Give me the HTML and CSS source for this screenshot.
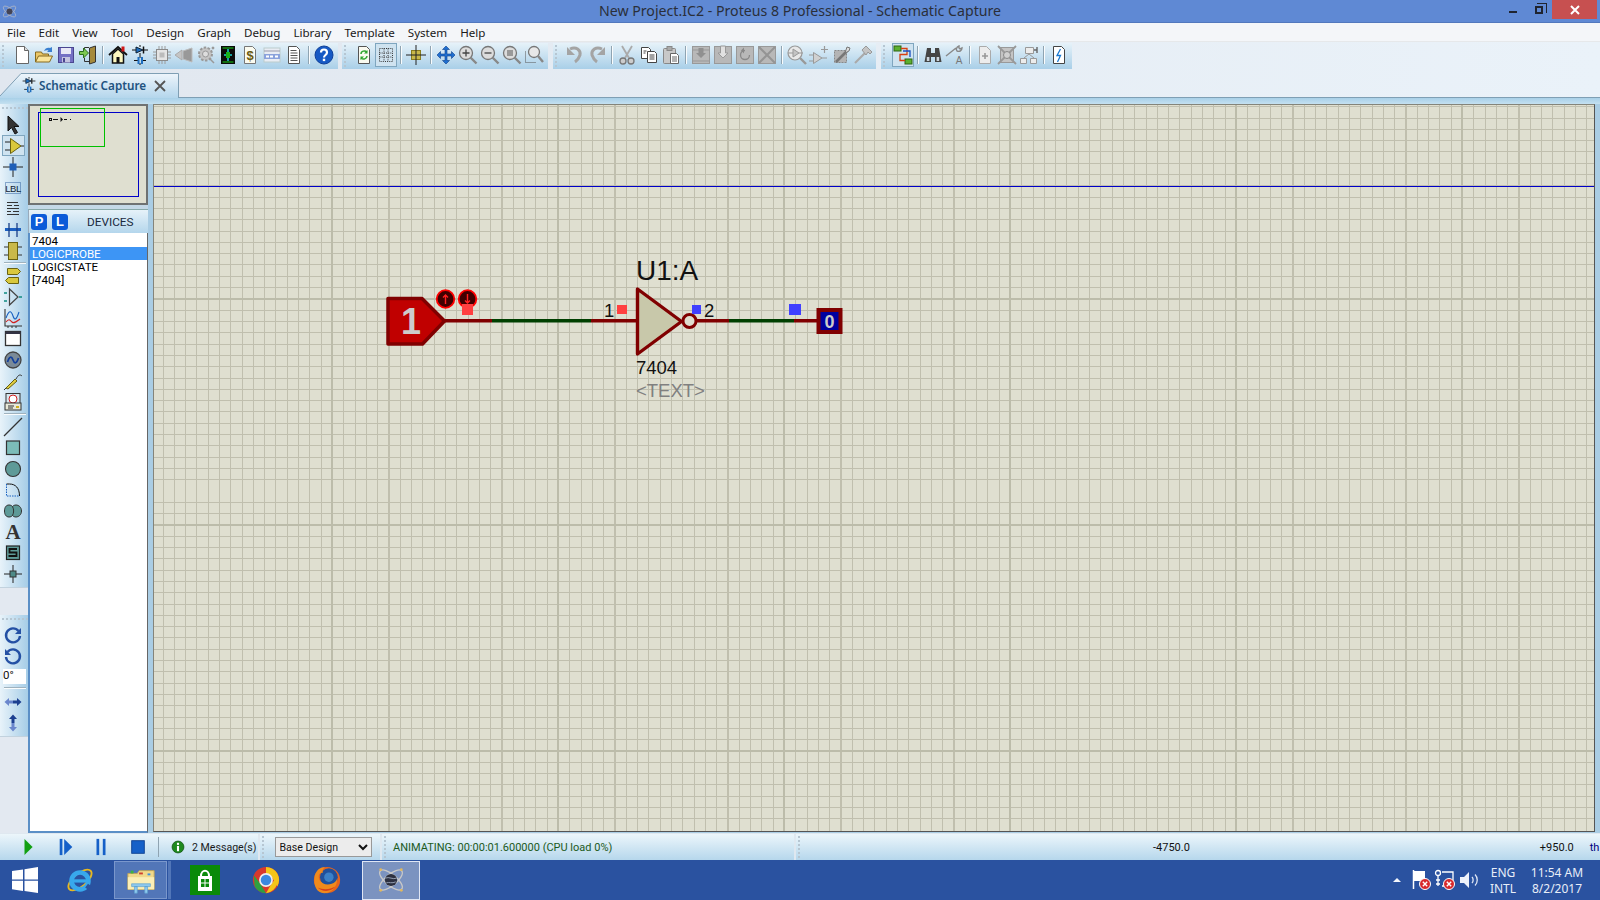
FILE: index.html
```html
<!doctype html>
<html lang="en">
<head>
	<meta charset="UTF-8">
	<title>New Project.IC2 - Proteus 8 Professional - Schematic Capture</title>
	<link rel="stylesheet" href="styles.css">
</head>
<body>
	<!-- icon set, each one on a 20x20 box -->
	<svg class="defs">
		<symbol id="i-new" viewBox="0 0 20 20"><path d="M4.500 1.500h8l4 4v13h-12z" fill="#fff" stroke="#666"/><path d="M12.500 1.500v4h4" fill="#ddd" stroke="#666"/></symbol>
		<symbol id="i-open" viewBox="0 0 20 20"><path d="M1.500 17V7h6l1 2h6v3" fill="#ecc766" stroke="#85691e"/><path d="M1.500 17l3-6h14l-3 6z" fill="#fbe59a" stroke="#85691e"/><path d="M10 6c1-3 4-4 6-3l2-1v5h-5l1.500-1.500c-1-.5-3-.5-4.500.5z" fill="#3a7fd0"/></symbol>
		<symbol id="i-save" viewBox="0 0 20 20"><rect x="2.500" y="2.500" width="15" height="15" fill="#7470c4" stroke="#4a4690"/><rect x="5" y="3" width="10" height="6" fill="#e8e8f6"/><rect x="6" y="12" width="8" height="5.500" fill="#c4c4e0"/><rect x="7" y="13" width="2" height="4" fill="#4a4690"/></symbol>
		<symbol id="i-exit" viewBox="0 0 20 20"><path d="M11.500 3l6-2v16l-6 2z" fill="#a58a3c" stroke="#333"/><path d="M11 2.500H6.500v3M6.500 13v3.500H11" fill="none" stroke="#333"/><path d="M1.500 6.500h4V3l5 5-5 5V9.500h-4z" fill="#7cc850" stroke="#2c6e1d"/></symbol>
		<symbol id="i-home" viewBox="0 0 20 20"><path d="M4.500 9v9h11V9L10 4z" fill="#fdf8c0" stroke="#111" stroke-width="1.500"/><path d="M1 10l9-8 9 8" fill="none" stroke="#111" stroke-width="1.800"/><rect x="13.500" y="1.500" width="3" height="5" fill="#d01818"/><rect x="8.500" y="12" width="3" height="6" fill="#111"/></symbol>
		<symbol id="i-comp" viewBox="0 0 20 20"><path d="M10 0v2M10 8v4M2 5h4M14 5h4M4 15.500h4M12 15.500h4M10 12v1M10 18v2" stroke="#111" fill="none"/><path d="M6 2l7 3-7 3z" fill="#1f6fc0" stroke="#123"/><path d="M13.500 1.500v7" stroke="#111" stroke-width="1.500"/><rect x="7.500" y="12" width="2" height="7" fill="#1f6fc0"/><rect x="11" y="12" width="2" height="7" fill="#1f6fc0"/></symbol>
		<symbol id="i-chip" viewBox="0 0 20 20"><rect x="4.500" y="4.500" width="11" height="11" fill="#e4e4e4" stroke="#8a8a8a"/><rect x="7.500" y="7.500" width="5" height="5" fill="#bbb"/><path d="M7 1v3M10 1v3M13 1v3M7 16v3M10 16v3M13 16v3M1 7h3M1 10h3M1 13h3M16 7h3M16 10h3M16 13h3" stroke="#9a9a9a"/></symbol>
		<symbol id="i-back" viewBox="0 0 20 20"><path d="M1 10l7-5v10z" fill="#c4c4c4" stroke="#aaa"/><path d="M9 6l9-3v14l-9-3z" fill="#999" stroke="#bbb"/></symbol>
		<symbol id="i-gear" viewBox="0 0 20 20"><circle cx="9.500" cy="9" r="6.500" fill="#c4c4c4" stroke="#999" stroke-width="2" stroke-dasharray="2.500 1.500"/><circle cx="9.500" cy="9" r="3" fill="#ddd" stroke="#999"/><path d="M14 14l4 4M16 2l2 2M18 2l-2 2" stroke="#999" stroke-width="1.500"/></symbol>
		<symbol id="i-pcb" viewBox="0 0 20 20"><rect x="3" y="1" width="14" height="18" fill="#0a0a0a"/><path d="M4.500 3h11M4.500 17h11" stroke="#18d018"/><path d="M10 4v12M6 10h8" stroke="#18d0d0" stroke-width="1.500"/><rect x="8" y="7" width="4" height="6" fill="#18b018"/></symbol>
		<symbol id="i-bill" viewBox="0 0 20 20"><path d="M4.500 1.500h8l3 3v14h-11z" fill="#fbfbf0" stroke="#777"/><text x="10" y="15" class="ig ig-bill">$</text></symbol>
		<symbol id="i-bom" viewBox="0 0 20 20"><rect x="2" y="3" width="16" height="14" fill="#e8ecf4" stroke="#bcc"/><path d="M2 6h16" stroke="#99a"/><rect x="2" y="9" width="16" height="5" fill="#8aa2dc"/><path d="M4 11.500h3M8 11.500h3M13 11.500h3" stroke="#fff" stroke-width="2"/></symbol>
		<symbol id="i-note" viewBox="0 0 20 20"><path d="M4.500 1.500h8l3 3v14h-11z" fill="#fff" stroke="#555"/><path d="M6.500 5.500h6M6.500 8h7M6.500 10.500h7M6.500 13h7M6.500 15.500h7" stroke="#555"/></symbol>
		<symbol id="i-help" viewBox="0 0 20 20"><circle cx="10" cy="10" r="9" fill="#1659c4" stroke="#0e3f98"/><path d="M7 7.500c0-4 6-4 6 0 0 2.500-3 2.500-3 5" fill="none" stroke="#fff" stroke-width="2.200"/><rect x="8.800" y="13.700" width="2.400" height="2.400" fill="#fff"/></symbol>
		<symbol id="i-sync" viewBox="0 0 20 20"><path d="M4.500 1.500h8l3 3v14h-11z" fill="#fafaf0" stroke="#555"/><path d="M7 9c0-3 4-4 6-2M13 11c0 3-4 4-6 2" fill="none" stroke="#2fa52f" stroke-width="1.500"/><path d="M13.500 5v3.500H10zM6.500 15v-3.500H10z" fill="#2fa52f"/></symbol>
		<symbol id="i-grid" viewBox="0 0 20 20"><path d="M3.500 3.500h13v13h-13zM3.500 8h13M3.500 12h13M8 3.500v13M12 3.500v13" fill="none" stroke="#333" stroke-dasharray="1 1.170"/></symbol>
		<symbol id="i-origin" viewBox="0 0 20 20"><rect x="5.500" y="5.500" width="9" height="9" fill="#c9b94a" stroke="#8a7d20"/><path d="M10 0v20M0 10h20" stroke="#222"/></symbol>
		<symbol id="i-pan" viewBox="0 0 20 20"><path d="M10 1l3.500 3.500h-2.500V9h4.500V6.500L19 10l-3.500 3.500V11H11v4.500h2.500L10 19l-3.500-3.500H9V11H4.500v2.500L1 10l3.500-3.500V9H9V4.500H6.500z" fill="#1f6fd0" stroke="#0c3f8c" stroke-width=".6"/></symbol>
		<symbol id="i-zin" viewBox="0 0 20 20"><circle cx="8" cy="8" r="6.500" fill="#dcdcdc" stroke="#777" stroke-width="1.300"/><path d="M4.500 8h7M8 4.500v7" stroke="#444" stroke-width="1.300"/><path d="M12.500 12.500l6 6" stroke="#888" stroke-width="2.400"/></symbol>
		<symbol id="i-zout" viewBox="0 0 20 20"><circle cx="8" cy="8" r="6.500" fill="#dcdcdc" stroke="#777" stroke-width="1.300"/><path d="M4.500 8h7" stroke="#444" stroke-width="1.300"/><path d="M12.500 12.500l6 6" stroke="#888" stroke-width="2.400"/></symbol>
		<symbol id="i-zall" viewBox="0 0 20 20"><circle cx="8" cy="8" r="6.500" fill="#dcdcdc" stroke="#777" stroke-width="1.300"/><rect x="5" y="5" width="6" height="6" fill="#999"/><path d="M12.500 12.500l6 6" stroke="#888" stroke-width="2.400"/></symbol>
		<symbol id="i-zarea" viewBox="0 0 20 20"><path d="M1.500 6.500v11h11" fill="none" stroke="#555" stroke-dasharray="1 1"/><circle cx="10" cy="7" r="5.500" fill="#e8e8e8" stroke="#777" stroke-width="1.300"/><path d="M14 11l5 6" stroke="#888" stroke-width="2.400"/></symbol>
		<symbol id="i-undo" viewBox="0 0 20 20"><path d="M5 4c6-3 11 1 10 6-1 3-2 5-5 7" fill="none" stroke="#a4a4a4" stroke-width="3"/><path d="M2 2v8h8z" fill="#a4a4a4"/></symbol>
		<symbol id="i-redo" viewBox="0 0 20 20"><path d="M15 4C9 1 4 5 5 10c1 3 2 5 5 7" fill="none" stroke="#a4a4a4" stroke-width="3"/><path d="M18 2v8h-8z" fill="#a4a4a4"/></symbol>
		<symbol id="i-cut" viewBox="0 0 20 20"><path d="M5 1l7 12M15 1L8 13" stroke="#aaa" stroke-width="1.800"/><circle cx="6" cy="16" r="3" fill="#ccc" stroke="#777" stroke-width="1.300"/><circle cx="14" cy="16" r="3" fill="#ccc" stroke="#777" stroke-width="1.300"/></symbol>
		<symbol id="i-copy" viewBox="0 0 20 20"><path d="M2.500 2.500h7l2 2v9h-9z" fill="#fff" stroke="#444"/><path d="M8.500 6.500h7l2 2v9h-9z" fill="#fff" stroke="#444"/><path d="M10.500 10h5M10.500 12h5M10.500 14h5M4.500 6h3M4.500 8h2" stroke="#444"/></symbol>
		<symbol id="i-paste" viewBox="0 0 20 20"><rect x="2.500" y="3.500" width="12" height="15" rx="1" fill="#c8c8c8" stroke="#888"/><rect x="6" y="1.500" width="5" height="4" fill="#aaa" stroke="#888"/><path d="M9.500 8.500h6l2 2v8h-8z" fill="#fff" stroke="#666"/><path d="M11 12h5M11 14h5M11 16h5" stroke="#666"/></symbol>
		<symbol id="i-bcopy" viewBox="0 0 20 20"><rect x="1.500" y="1.500" width="17" height="17" fill="#b8b8b8" stroke="#999"/><path d="M1.500 5h17M1.500 16h17" stroke="#999"/><path d="M7.500 3h5v5H15l-5 5-5-5h2.500z" fill="#909090"/></symbol>
		<symbol id="i-bmove" viewBox="0 0 20 20"><rect x="1.500" y="1.500" width="17" height="17" fill="#b8b8b8" stroke="#999"/><path d="M7.500 1h5v7H15l-5 5-5-5h2.500z" fill="#e0e0e0" stroke="#999"/></symbol>
		<symbol id="i-brot" viewBox="0 0 20 20"><rect x="1.500" y="1.500" width="17" height="17" fill="#b8b8b8" stroke="#999"/><path d="M14.500 10a4.500 4.500 0 1 1-4.500-4.500" fill="none" stroke="#888" stroke-width="1.300"/><path d="M9 2.500v6l-3-3z" fill="#888"/></symbol>
		<symbol id="i-bdel" viewBox="0 0 20 20"><rect x="1.500" y="1.500" width="17" height="17" fill="#b8b8b8" stroke="#999"/><path d="M2 2l16 16M18 2L2 18" stroke="#949494" stroke-width="2"/></symbol>
		<symbol id="i-pick" viewBox="0 0 20 20"><circle cx="8" cy="8" r="7" fill="#e8e8e8" stroke="#999" stroke-width="1.200"/><path d="M6 4v8l6-4zM1 8h5M12 8h4" fill="#c4c4c4" stroke="#999"/><path d="M13 13l6 6" stroke="#999" stroke-width="2.400"/></symbol>
		<symbol id="i-make" viewBox="0 0 20 20"><path d="M4.500 7.500v11L13 13z" fill="#d0d0d0" stroke="#999"/><path d="M0 10h4M0 16h4M13 13h5M12 4.500h7M15.500 1v7" stroke="#999" stroke-width="1.200"/></symbol>
		<symbol id="i-pack" viewBox="0 0 20 20"><rect x="3.500" y="5.500" width="12" height="12" fill="#b4b4b4" stroke="#888" stroke-dasharray="2 1"/><path d="M5 17L16 6" stroke="#777" stroke-width="2.600"/><path d="M14 8l2-6 3 1-1 3z" fill="#ddd" stroke="#777"/></symbol>
		<symbol id="i-ham" viewBox="0 0 20 20"><path d="M2 18l10-10" stroke="#aaa" stroke-width="2.200"/><path d="M9 5l4-4 6 6-2 2-2-2-2 3z" fill="#c4c4c4" stroke="#999"/></symbol>
		<symbol id="i-route" viewBox="0 0 20 20"><rect x="1" y="1" width="7" height="5" fill="#5cb030" stroke="#2c6410"/><rect x="12" y="14" width="7" height="5" fill="#5cb030" stroke="#2c6410"/><path d="M8 3.500h6v6H7v6h5" fill="none" stroke="#d84010" stroke-width="1.300"/><path d="M10 6h7v6" fill="none" stroke="#1a4fc0" stroke-width="1.300"/></symbol>
		<symbol id="i-find" viewBox="0 0 20 20"><path d="M4 3h4v5h4V3h4l2.500 14h-6.500v-5H8v5H1.500z" fill="#444"/><rect x="3.800" y="12" width="2.600" height="4" fill="#cbd4dc"/><rect x="13.600" y="12" width="2.600" height="4" fill="#cbd4dc"/></symbol>
		<symbol id="i-prop" viewBox="0 0 20 20"><path d="M1 11L11 3M14 1c-3 1-3 4-2 5 2 1 5 0 5-3l-2 1-1-1z" fill="none" stroke="#888" stroke-width="1.400"/><text x="14" y="19" class="ig ig-prop">A</text></symbol>
		<symbol id="i-sadd" viewBox="0 0 20 20"><path d="M4.500 1.500h7l4 4v13h-11z" fill="#ececec" stroke="#aaa"/><path d="M7 11h6M10 8v6" stroke="#999" stroke-width="1.600"/></symbol>
		<symbol id="i-sdel" viewBox="0 0 20 20"><rect x="3.500" y="2.500" width="13" height="15" fill="#c4c4c4" stroke="#999"/><path d="M1 1l18 18M19 1L1 19" stroke="#999" stroke-width="1.800"/><circle cx="10" cy="10" r="3.500" fill="#d0d0d0" stroke="#888"/></symbol>
		<symbol id="i-parent" viewBox="0 0 20 20"><path d="M6.500 2.500h8v6h-8zM1.500 13.500h6v5h-6zM11.500 13.500h6v5h-6z" fill="#ececec" stroke="#999"/><path d="M10 9l-5 4M10 9l5 4" stroke="#999"/><path d="M15 5h3M18 2v6" stroke="#666" stroke-width="1.400"/></symbol>
		<symbol id="i-net" viewBox="0 0 20 20"><path d="M4.500 1.500h8l3 3v14h-11z" fill="#fff" stroke="#444"/><path d="M11.500 4L8 10.500h3.500L8.500 17" fill="none" stroke="#1878d0" stroke-width="1.300"/></symbol>
		<symbol id="i-sel" viewBox="0 0 20 20"><path d="M5 1v15l3.500-3.500L12 19l2.500-1.500-3.500-6h5z" fill="#333" stroke="#111"/></symbol>
		<symbol id="i-gate" viewBox="0 0 20 20"><path d="M6.500 2.500v15L17 10z" fill="#d9c83c" stroke="#6a6210"/><path d="M1 6h5M1 14h5M17 10h3" stroke="#222"/></symbol>
		<symbol id="i-junc" viewBox="0 0 20 20"><path d="M10 0v20M0 10h20" stroke="#222"/><rect x="6.500" y="6.500" width="7" height="7" fill="#1f5fb8"/></symbol>
		<symbol id="i-lbl" viewBox="0 0 20 20"><rect x="2.500" y="4.500" width="15" height="11" fill="none" stroke="#3060a0" stroke-dasharray="1 1"/><text x="10" y="14" class="ig ig-lbl">LBL</text></symbol>
		<symbol id="i-script" viewBox="0 0 20 20"><path d="M4 3.500h11M4 6.500h5M11 6.500h5M4 9.500h12M4 12.500h4M10 12.500h6M4 15.500h12" stroke="#333"/></symbol>
		<symbol id="i-bus" viewBox="0 0 20 20"><rect x="2" y="8" width="16" height="3" fill="#1c5fc0"/><path d="M6 3v14M14 3v14" stroke="#1a3f88" stroke-width="1.300"/></symbol>
		<symbol id="i-sub" viewBox="0 0 20 20"><rect x="5.500" y="1.500" width="9" height="17" fill="#c9b94a" stroke="#6a6210"/><path d="M1 6h4M1 14h4M15 6h4M15 14h4" stroke="#333"/></symbol>
		<symbol id="i-term" viewBox="0 0 20 20"><path d="M4.500 2.500h10l3 3-3 3h-10z" fill="#d9c83c" stroke="#6a6210"/><path d="M15.500 11.500h-10l-3 3 3 3h10z" fill="#d9c83c" stroke="#6a6210"/></symbol>
		<symbol id="i-pin" viewBox="0 0 20 20"><path d="M6.500 2v16L15 10z" fill="none" stroke="#444" stroke-width="1.200"/><path d="M1 6h3M1 14h3M16 10h3" stroke="#0f8a80" stroke-width="1.300"/></symbol>
		<symbol id="i-graph" viewBox="0 0 20 20"><path d="M2 1v17h17" fill="none" stroke="#333" stroke-width="1.100"/><path d="M3 10c3-8 5-8 7-2s4 2 6-4" fill="none" stroke="#1860c0" stroke-width="1.100"/><path d="M3 14c3-4 4-2 6 0s4 0 8-3" fill="none" stroke="#d02020" stroke-width="1.100"/><path d="M5 18v2M9 18v2M13 18v2" stroke="#333"/></symbol>
		<symbol id="i-tape" viewBox="0 0 20 20"><rect x="2.500" y="2.500" width="15" height="14" fill="#fff" stroke="#333" stroke-width="1.300"/><rect x="2.500" y="2.500" width="15" height="2.500" fill="#334"/></symbol>
		<symbol id="i-gen" viewBox="0 0 20 20"><circle cx="10" cy="10" r="8" fill="#7a8a98" stroke="#444" stroke-width="1.300"/><path d="M4.500 12c2-6 4-6 5.500-2s3.500 4 5.500-2" fill="none" stroke="#123f9c" stroke-width="1.800"/></symbol>
		<symbol id="i-probe" viewBox="0 0 20 20"><path d="M3 17l9-9 2 2-9 8z" fill="#e0cc40" stroke="#665f10"/><path d="M1 19l2-2M13 8c2-4 4-5 6-3" fill="none" stroke="#333"/></symbol>
		<symbol id="i-inst" viewBox="0 0 20 20"><rect x="3" y="1.500" width="14" height="10" fill="#d8e8f0" stroke="#333"/><circle cx="10" cy="7" r="4" fill="#fff" stroke="#d02020"/><rect x="2" y="11" width="16" height="7" fill="#e8e8d8" stroke="#333"/><path d="M5 14h6M5 16h5" stroke="#333"/><rect x="13" y="14" width="3" height="2" fill="#d0b020"/></symbol>
		<symbol id="i-line" viewBox="0 0 20 20"><path d="M1 19L19 1" stroke="#333" stroke-width="1.300"/></symbol>
		<symbol id="i-rect" viewBox="0 0 20 20"><rect x="3.500" y="3" width="13" height="13.500" fill="#7cbcb8" stroke="#333" stroke-width="1.200"/></symbol>
		<symbol id="i-circ" viewBox="0 0 20 20"><circle cx="10" cy="10" r="7.500" fill="#5e9a98" stroke="#333" stroke-width="1.100"/></symbol>
		<symbol id="i-arc" viewBox="0 0 20 20"><path d="M3.500 4h3c6 0 10 4 10 12" fill="none" stroke="#111"/><path d="M3.500 4v12h13" fill="none" stroke="#1860c0" stroke-dasharray="1.500 1"/></symbol>
		<symbol id="i-path" viewBox="0 0 20 20"><path d="M6 4C3 4 1.500 6.500 1.500 10S3 16 6 16c1.500 0 2.500-.5 3.500-1.500 1 1 2 1.500 3.500 1.500 3 0 5.500-2.500 5.500-6S16 4 13 4c-1.500 0-2.500.5-3.500 1.500C8.500 4.500 7.500 4 6 4z" fill="#5e9a98" stroke="#333"/><path d="M9.500 5.500c1.500 3 1.500 6 0 9" fill="none" stroke="#333"/></symbol>
		<symbol id="i-a" viewBox="0 0 20 20"><text x="10" y="17" class="ig ig-a">A</text></symbol>
		<symbol id="i-s" viewBox="0 0 20 20"><rect x="3.500" y="3" width="13" height="13.500" fill="#5e9a98" stroke="#222" stroke-width="1.200"/><path d="M14 6H6.500v3.500h7V13H5.500" fill="none" stroke="#111" stroke-width="1.800"/></symbol>
		<symbol id="i-mark" viewBox="0 0 20 20"><path d="M10 1v18M1 10h18" stroke="#222"/><rect x="7" y="7" width="6" height="6" fill="#4e8a88" stroke="#333"/></symbol>
		<symbol id="i-cw" viewBox="0 0 20 20"><path d="M15.500 6a7 7 0 1 0 1.500 5" fill="none" stroke="#2450a4" stroke-width="2.400"/><path d="M18 3v6h-6z" fill="#2450a4"/></symbol>
		<symbol id="i-ccw" viewBox="0 0 20 20"><path d="M4.500 6a7 7 0 1 1-1.500 5" fill="none" stroke="#2450a4" stroke-width="2.400"/><path d="M2 3v6h6z" fill="#2450a4"/></symbol>
		<symbol id="i-fliph" viewBox="0 0 20 20"><path d="M10 8.500H6V6l-4.500 4L6 14v-2.500h4z" fill="#6a86cc"/><path d="M10 8.500h4V6l4.500 4-4.500 4v-2.500h-4z" fill="#1c3f90"/></symbol>
		<symbol id="i-flipv" viewBox="0 0 20 20"><path d="M8.500 10V6H6l4-4.500L14 6h-2.500v4z" fill="#1c3f90"/><path d="M8.500 10v4H6l4 4.500 4-4.500h-2.500v-4z" fill="#6a86cc"/></symbol>
		<symbol id="i-play" viewBox="0 0 20 20"><path d="M5 1l9 9-9 9z" fill="#12a012"/></symbol>
		<symbol id="i-step" viewBox="0 0 20 20"><rect x="3" y="1" width="3" height="18" fill="#1560c8"/><path d="M8 1l9 9-9 9z" fill="#1560c8"/></symbol>
		<symbol id="i-pause" viewBox="0 0 20 20"><rect x="5" y="1" width="3" height="18" fill="#1560c8"/><rect x="12" y="1" width="3" height="18" fill="#1560c8"/></symbol>
		<symbol id="i-stop" viewBox="0 0 20 20"><rect x="3" y="3" width="14" height="14" fill="#1560c8" stroke="#0d3f90"/></symbol>
		<symbol id="i-info" viewBox="0 0 20 20"><circle cx="10" cy="10" r="8.500" fill="#1e8a1e" stroke="#0c4a0c"/><rect x="8.500" y="4" width="3" height="3" fill="#fff"/><rect x="8.500" y="8.500" width="3" height="7.500" fill="#fff"/></symbol>
	</svg>

	<div class="titlebar">
		<svg class="appicon" viewBox="0 0 20 20"><ellipse cx="10" cy="10" rx="9" ry="3.500" transform="rotate(40 10 10)" fill="none" stroke="#aab4c8"/><ellipse cx="10" cy="10" rx="9" ry="3.500" transform="rotate(-40 10 10)" fill="none" stroke="#aab4c8"/><circle cx="10" cy="10" r="3.500" fill="#445"/></svg>
		<div class="title">New Project.IC2 - Proteus 8 Professional - Schematic Capture</div>
		<div class="winbtns">
			<div class="winbtn"><span class="win-min"></span></div>
			<div class="winbtn"><span class="win-max"></span></div>
			<div class="winclose">
				<svg viewBox="0 0 10 10"><path d="M1 1l8 8M9 1l-8 8" stroke="#fff" stroke-width="2"/></svg>
			</div>
		</div>
	</div>

	<div class="menubar">
		<span>File</span><span>Edit</span><span>View</span><span>Tool</span><span>Design</span><span>Graph</span><span>Debug</span><span>Library</span><span>Template</span><span>System</span><span>Help</span>
	</div>

	<div class="toprow">
		<div class="toolbars">
			<div class="tgroup g1">
				<div class="grip"></div>
				<div class="tb"><svg class="ic"><use href="#i-new"/></svg></div>
				<div class="tb"><svg class="ic"><use href="#i-open"/></svg></div>
				<div class="tb"><svg class="ic"><use href="#i-save"/></svg></div>
				<div class="tb"><svg class="ic"><use href="#i-exit"/></svg></div>
				<div class="tsep"></div>
				<div class="tb"><svg class="ic"><use href="#i-home"/></svg></div>
				<div class="tb"><svg class="ic"><use href="#i-comp"/></svg></div>
				<div class="tb"><svg class="ic"><use href="#i-chip"/></svg></div>
				<div class="tb"><svg class="ic"><use href="#i-back"/></svg></div>
				<div class="tb"><svg class="ic"><use href="#i-gear"/></svg></div>
				<div class="tb"><svg class="ic"><use href="#i-pcb"/></svg></div>
				<div class="tb"><svg class="ic"><use href="#i-bill"/></svg></div>
				<div class="tb"><svg class="ic"><use href="#i-bom"/></svg></div>
				<div class="tb"><svg class="ic"><use href="#i-note"/></svg></div>
				<div class="tsep"></div>
				<div class="tb"><svg class="ic"><use href="#i-help"/></svg></div>
			</div>
			<div class="tgroup g2">
				<div class="grip"></div>
				<div class="tb"><svg class="ic"><use href="#i-sync"/></svg></div>
				<div class="tb on"><svg class="ic"><use href="#i-grid"/></svg></div>
				<div class="tsep"></div>
				<div class="tb"><svg class="ic"><use href="#i-origin"/></svg></div>
				<div class="tsep"></div>
				<div class="tb"><svg class="ic"><use href="#i-pan"/></svg></div>
				<div class="tb"><svg class="ic"><use href="#i-zin"/></svg></div>
				<div class="tb"><svg class="ic"><use href="#i-zout"/></svg></div>
				<div class="tb"><svg class="ic"><use href="#i-zall"/></svg></div>
				<div class="tb"><svg class="ic"><use href="#i-zarea"/></svg></div>
			</div>
			<div class="tgroup g3">
				<div class="grip"></div>
				<div class="tb"><svg class="ic"><use href="#i-undo"/></svg></div>
				<div class="tb"><svg class="ic"><use href="#i-redo"/></svg></div>
				<div class="tsep"></div>
				<div class="tb"><svg class="ic"><use href="#i-cut"/></svg></div>
				<div class="tb"><svg class="ic"><use href="#i-copy"/></svg></div>
				<div class="tb"><svg class="ic"><use href="#i-paste"/></svg></div>
				<div class="tsep"></div>
				<div class="tb"><svg class="ic"><use href="#i-bcopy"/></svg></div>
				<div class="tb"><svg class="ic"><use href="#i-bmove"/></svg></div>
				<div class="tb"><svg class="ic"><use href="#i-brot"/></svg></div>
				<div class="tb"><svg class="ic"><use href="#i-bdel"/></svg></div>
				<div class="tsep"></div>
				<div class="tb"><svg class="ic"><use href="#i-pick"/></svg></div>
				<div class="tb"><svg class="ic"><use href="#i-make"/></svg></div>
				<div class="tb"><svg class="ic"><use href="#i-pack"/></svg></div>
				<div class="tb"><svg class="ic"><use href="#i-ham"/></svg></div>
			</div>
			<div class="tgroup g4">
				<div class="grip"></div>
				<div class="tb on"><svg class="ic"><use href="#i-route"/></svg></div>
				<div class="tsep"></div>
				<div class="tb"><svg class="ic"><use href="#i-find"/></svg></div>
				<div class="tb"><svg class="ic"><use href="#i-prop"/></svg></div>
				<div class="tsep"></div>
				<div class="tb"><svg class="ic"><use href="#i-sadd"/></svg></div>
				<div class="tb"><svg class="ic"><use href="#i-sdel"/></svg></div>
				<div class="tb"><svg class="ic"><use href="#i-parent"/></svg></div>
				<div class="tsep"></div>
				<div class="tb"><svg class="ic"><use href="#i-net"/></svg></div>
			</div>
		</div>
		<div class="tab">
			<svg class="tabshape" viewBox="0 0 179 25">
				<defs><linearGradient id="tabfill" x1="0" y1="0" x2="0" y2="1"><stop offset="0" stop-color="#eef5fb"/><stop offset="1" stop-color="#b4d6ec"/></linearGradient></defs>
				<path d="M0 23L21 .5h157.500V25H0z" fill="url(#tabfill)"/>
				<path d="M0 23L21 .5h157.500V25" fill="none" stroke="#7f9fb4"/>
			</svg>
			<svg class="tabicon"><use href="#i-comp"/></svg>
			<span class="tablabel">Schematic Capture</span>
			<svg class="tabclose" viewBox="0 0 12 12"><path d="M1 1l10 10M11 1L1 11" stroke="#555" stroke-width="1.800"/></svg>
		</div>
	</div>
	<div class="band"></div>

	<div class="workspace">
		<div class="sidetools">
			<div class="sgroup">
				<div class="grip-h"></div>
				<div class="sb"><svg class="ic"><use href="#i-sel"/></svg></div>
				<div class="sb on"><svg class="ic"><use href="#i-gate"/></svg></div>
				<div class="sb"><svg class="ic"><use href="#i-junc"/></svg></div>
				<div class="sb"><svg class="ic"><use href="#i-lbl"/></svg></div>
				<div class="sb"><svg class="ic"><use href="#i-script"/></svg></div>
				<div class="sb"><svg class="ic"><use href="#i-bus"/></svg></div>
				<div class="sb"><svg class="ic"><use href="#i-sub"/></svg></div>
				<div class="ssep"></div>
				<div class="sb"><svg class="ic"><use href="#i-term"/></svg></div>
				<div class="sb"><svg class="ic"><use href="#i-pin"/></svg></div>
				<div class="sb"><svg class="ic"><use href="#i-graph"/></svg></div>
				<div class="sb"><svg class="ic"><use href="#i-tape"/></svg></div>
				<div class="sb"><svg class="ic"><use href="#i-gen"/></svg></div>
				<div class="sb"><svg class="ic"><use href="#i-probe"/></svg></div>
				<div class="sb"><svg class="ic"><use href="#i-inst"/></svg></div>
				<div class="ssep"></div>
				<div class="sb"><svg class="ic"><use href="#i-line"/></svg></div>
				<div class="sb"><svg class="ic"><use href="#i-rect"/></svg></div>
				<div class="sb"><svg class="ic"><use href="#i-circ"/></svg></div>
				<div class="sb"><svg class="ic"><use href="#i-arc"/></svg></div>
				<div class="sb"><svg class="ic"><use href="#i-path"/></svg></div>
				<div class="sb"><svg class="ic"><use href="#i-a"/></svg></div>
				<div class="sb"><svg class="ic"><use href="#i-s"/></svg></div>
				<div class="sb"><svg class="ic"><use href="#i-mark"/></svg></div>
			</div>
			<div class="sgroup second">
				<div class="grip-h"></div>
				<div class="sb"><svg class="ic"><use href="#i-cw"/></svg></div>
				<div class="sb"><svg class="ic"><use href="#i-ccw"/></svg></div>
				<div class="angle">0°</div>
				<div class="ssep"></div>
				<div class="sb"><svg class="ic"><use href="#i-fliph"/></svg></div>
				<div class="sb"><svg class="ic"><use href="#i-flipv"/></svg></div>
			</div>
		</div>

		<div class="sidepanel">
			<div class="overview">
				<svg viewBox="0 0 116 97">
					<rect x="8.500" y="6.500" width="100" height="84" fill="none" stroke="#0000c8"/>
					<rect x="10.500" y="2.500" width="64" height="38" fill="none" stroke="#00c000"/>
					<path d="M23 13.500h5M34 13.500h3M40 13.500h1" stroke="#111"/>
					<rect x="19.500" y="12.500" width="2" height="2" fill="none" stroke="#111"/>
					<path d="M30.500 11v5l2.500-2.500z" fill="#111"/>
				</svg>
			</div>
			<div class="devices">
				<div class="devhead">
					<span class="devbtn">P</span>
					<span class="devbtn">L</span>
					<span class="devtitle">DEVICES</span>
				</div>
				<ul class="devlist">
					<li>7404</li>
					<li class="picked">LOGICPROBE</li>
					<li>LOGICSTATE</li>
					<li>[7404]</li>
				</ul>
			</div>
		</div>

		<div class="canvas">
			<!-- viewBox keeps page coordinates so the drawing can be read against the screen -->
			<svg class="sheet" viewBox="154 105 1440 726">
				<path d="M154 186.500h1440" stroke="#0000c8"/>

				<path d="M445 320.800h47M591 320.800h46M697 320.800h32M794 320.800h23" stroke="#800000" stroke-width="3.500"/>
				<path d="M492 320.800h99M729 320.800h65" stroke="#004000" stroke-width="3.500"/>

				<path d="M388 298.500h34l22.500 22.500-22 23h-34.500z" fill="#c00000" stroke="#800000" stroke-width="3.500" stroke-linejoin="round"/>
				<text x="411" y="334" class="logic-one">1</text>

				<path d="M637.500 289v65l44-32.500z" fill="#c8c8aa" stroke="#800000" stroke-width="3.400" stroke-linejoin="round"/>
				<circle cx="689.500" cy="321" r="6.500" fill="#dfdfd0" stroke="#800000" stroke-width="3"/>

				<rect x="818.500" y="310" width="22" height="22" fill="#0000a0" stroke="#800000" stroke-width="4"/>
				<text x="829.500" y="328" class="logic-zero">0</text>

				<circle cx="445.500" cy="299" r="8.800" fill="#400000" stroke="#ff0000" stroke-width="1.800"/>
				<path d="M445.500 304v-8M443 297.500l2.500-2.500 2.500 2.500" fill="none" stroke="#ff2020" stroke-width="1.400"/>
				<circle cx="467.500" cy="299" r="8.800" fill="#400000" stroke="#ff0000" stroke-width="1.800"/>
				<path d="M467.500 294v8M465 300.500l2.500 2.500 2.500-2.500" fill="none" stroke="#ff2020" stroke-width="1.400"/>

				<rect x="462" y="304" width="11" height="11" fill="#ff4040"/>
				<rect x="617" y="305" width="10" height="9" fill="#ff4040"/>
				<rect x="692" y="305" width="9" height="9" fill="#4040ff"/>
				<rect x="789" y="304" width="12" height="11" fill="#4040ff"/>

				<text x="636" y="280" class="ref">U1:A</text>
				<text x="604" y="317" class="pin">1</text>
				<text x="704" y="317" class="pin">2</text>
				<text x="636" y="374" class="pin">7404</text>
				<text x="636" y="397" class="pin muted">&lt;TEXT&gt;</text>
			</svg>
		</div>
	</div>

	<div class="statusbar">
		<div class="sgrp run">
			<svg class="ic play"><use href="#i-play"/></svg>
			<svg class="ic step"><use href="#i-step"/></svg>
			<svg class="ic pause"><use href="#i-pause"/></svg>
			<svg class="ic stop"><use href="#i-stop"/></svg>
			<div class="stsep"></div>
			<svg class="info"><use href="#i-info"/></svg>
			<span class="msg">2 Message(s)</span>
		</div>
		<div class="sgrp design">
			<div class="grip"></div>
			<select class="variant"><option>Base Design</option></select>
		</div>
		<div class="sgrp anim">
			<div class="grip"></div>
			<span class="animtext">ANIMATING: 00:00:01.600000 (CPU load 0%)</span>
		</div>
		<div class="sgrp coords">
			<div class="grip"></div>
			<span class="cx">-4750.0</span>
			<span class="cy">+950.0</span>
			<span class="unit">th</span>
		</div>
	</div>

	<div class="taskbar">
		<div class="tk start">
			<svg viewBox="0 0 26 26" class="winlogo"><path d="M0 4l11-1.600v10H0zM12.500 2.200L26 0v12.400H12.500zM0 13.800h11v10.100L0 22.300zM12.500 13.800H26V26l-13.500-2z" fill="#fff"/></svg>
		</div>
		<div class="tk">
			<svg viewBox="0 0 32 32" class="tkicon"><ellipse cx="16" cy="16" rx="15" ry="7" transform="rotate(-40 16 16)" fill="none" stroke="#e8b820" stroke-width="2"/><circle cx="16" cy="17" r="9" fill="none" stroke="#38a8ec" stroke-width="5"/><path d="M8 17h17" stroke="#38a8ec" stroke-width="3.500"/><path d="M23 22l4 3" stroke="#2a52a0" stroke-width="5"/></svg>
		</div>
		<div class="tk active">
			<svg viewBox="0 0 32 32" class="tkicon"><path d="M2 9h10l2-3h16v20H2z" fill="#f1d98a" stroke="#bfa55a"/><path d="M2 13h28v13H2z" fill="#fbeeb6"/><rect x="5" y="6" width="3" height="3" fill="#3fb53f"/><rect x="14" y="8" width="4" height="2" fill="#d04030"/><rect x="23" y="9" width="3" height="2" fill="#3a90e0"/><path d="M6 20h20v3H6zM9 23h3v7H9zM20 23h3v7h-3z" fill="#8fc9ee" stroke="#5aa0d0" stroke-width=".7"/></svg>
			<div class="sliver"></div>
		</div>
		<div class="tk">
			<svg viewBox="0 0 30 30" class="tkicon"><rect width="30" height="30" fill="#0a8a0a"/><path d="M8 11h14v15H8z" fill="#fff"/><path d="M11 11c0-7 8-7 8 0" fill="none" stroke="#fff" stroke-width="2"/><path d="M11 14h3.500v3.500H11zM15.500 14H19v3.500h-3.500zM11 18.500h3.500V22H11zM15.500 18.500H19V22h-3.500z" fill="#0a8a0a"/></svg>
		</div>
		<div class="tk">
			<svg viewBox="0 0 32 32" class="tkicon"><circle cx="16" cy="16" r="14" fill="#d8382c"/><path d="M16 2a14 14 0 0 1 12.100 21L22 12.500H16z" fill="#f5c518"/><path d="M3.900 23L3 11l7 9 6 10a14 14 0 0 1-12.100-7z" fill="#2fa040"/><path d="M16 30l6.100-10.500 6-7A14 14 0 0 1 16 30z" fill="#f5c518"/><circle cx="16" cy="16" r="6.500" fill="#3a88e0" stroke="#eee" stroke-width="1.800"/></svg>
		</div>
		<div class="tk">
			<svg viewBox="0 0 32 32" class="tkicon"><circle cx="16" cy="16" r="14" fill="#e8641c"/><circle cx="18" cy="13" r="9.500" fill="#20509c"/><circle cx="18" cy="13" r="5" fill="#3a80c8"/><path d="M3 11c2-6 6-9 11-9-3 2-3 5-2 6-4 0-6 3-4 8 2 4 8 6 13 4 3-1 5-3 6-6 0 9-6 16-14 16S1 22 3 11z" fill="#f08a1c"/><path d="M6 24c5 5 14 5 19-1-5 3-13 4-19 1z" fill="#d8401c"/></svg>
		</div>
		<div class="tk current">
			<svg viewBox="0 0 32 32" class="tkicon"><ellipse cx="16" cy="16" rx="15" ry="6" transform="rotate(40 16 16)" fill="none" stroke="#c8c8c8" stroke-width="1.400"/><ellipse cx="16" cy="16" rx="15" ry="6" transform="rotate(-40 16 16)" fill="none" stroke="#c8c8c8" stroke-width="1.400"/><circle cx="16" cy="16" r="6.500" fill="#2c3040"/><path d="M10 14c4-2 8 2 12 0M11 19c3-1 6 1 10-1" stroke="#9aa4b8" fill="none"/><circle cx="5" cy="5" r="1.500" fill="#e0b860"/><circle cx="27" cy="5" r="1.500" fill="#e0b860"/><circle cx="5" cy="27" r="1.500" fill="#e0b860"/><circle cx="27" cy="27" r="1.500" fill="#e0b860"/></svg>
		</div>
		<div class="tray">
			<div class="tr"><span class="uparrow"></span></div>
			<div class="tr">
				<svg viewBox="0 0 22 22" class="tricon"><path d="M3.500 1v19" stroke="#fff" stroke-width="1.500"/><path d="M4 2h11v10H4z" fill="#fff"/><circle cx="15" cy="15" r="5.500" fill="#d8282c" stroke="#fff"/><path d="M12.800 12.800l4.400 4.400M17.200 12.800l-4.400 4.400" stroke="#fff" stroke-width="1.400"/></svg>
			</div>
			<div class="tr">
				<svg viewBox="0 0 22 22" class="tricon"><circle cx="4" cy="4" r="2.500" fill="none" stroke="#fff" stroke-width="1.300"/><path d="M4 7v10M2 11h4M2 15h4M8 3h11v10M8 17h4" stroke="#fff" stroke-width="1.300" fill="none"/><circle cx="15" cy="15" r="5.500" fill="#d8282c" stroke="#fff"/><path d="M12.800 12.800l4.400 4.400M17.200 12.800l-4.400 4.400" stroke="#fff" stroke-width="1.400"/></svg>
			</div>
			<div class="tr">
				<svg viewBox="0 0 22 22" class="tricon"><path d="M2 8h4l5-5v16l-5-5H2z" fill="#eef2fa"/><path d="M14 8c1.500 1.500 1.500 4.500 0 6M17 5.500c3 3 3 8 0 11" fill="none" stroke="#dfe6f4" stroke-width="1.300"/></svg>
			</div>
			<div class="lang"><div>ENG</div><div>INTL</div></div>
			<div class="clock"><div>11:54 AM</div><div>8/2/2017</div></div>
		</div>
	</div>
</body>
</html>
```

FILE: styles.css
```css
*{padding: 0; margin: 0; box-sizing: border-box; list-style: none;}
html, body{width: 1600px; height: 900px; overflow: hidden;}
body{
	display: flex; flex-direction: column;
	font-family: "Noto Sans", "Liberation Sans", sans-serif;
	font-size: 12px; color: #111; background: #e4ebf3;
}
.defs{display: none;}
.ic{width: 20px; height: 20px; display: block;}
.ig{font-family: "Liberation Sans", sans-serif; text-anchor: middle;}
.ig-bill{font-size: 13px; fill: #6a5a10; font-weight: bold;}
.ig-prop{font-size: 10px; fill: #777;}
.ig-lbl{font-size: 9.500px; fill: #123; letter-spacing: -0.4px;}
.ig-a{font-size: 21px; fill: #333; font-weight: bold; font-family: "Liberation Serif", serif;}

/* title */
.titlebar{
	height: 23px; background: #5f89d4; border-bottom: 1px solid #5278bd;
	display: flex; align-items: center; position: relative; flex: none;
}
.appicon{width: 17px; height: 17px; margin-left: 1px;}
.title{
	flex: 1; text-align: center; font-size: 14.170px; color: #2a2f3a;
	margin-right: 18px; line-height: 22px;
}
.winbtns{position: absolute; right: 3px; top: 0; display: flex; height: 19px;}
.winbtn{width: 26px; display: flex; align-items: center; justify-content: center;}
.win-min{width: 8px; height: 2px; background: #1f2430; margin-top: 4px;}
.win-max{width: 8px; height: 8px; border: 2px solid #1f2430; margin-top: 1px; position: relative;}
.win-max::after{
	content: ""; position: absolute; left: 0; top: -5px; width: 9px; height: 9px;
	border-top: 1px solid #1f2430; border-right: 1px solid #1f2430;
}
.winclose{
	width: 45px; background: #c75050;
	display: flex; align-items: center; justify-content: center;
}
.winclose svg{width: 10px; height: 10px;}

/* menu */
.menubar{
	height: 19px; background: #f4f6f9; border-bottom: 1px solid #e6e8ea;
	display: flex; gap: 13px; padding-left: 7px; padding-top: 1px; flex: none;
	font-size: 11.600px; line-height: 17px; color: #1a1a1a;
}

/* toolbars and tab */
.toprow{
	height: 55px; flex: none;
	background: linear-gradient(90deg, #e1e7ef, #eaf2f9);
	display: flex; flex-direction: column;
}
.toolbars{display: flex; height: 27px; padding-top: 1px;}
.tgroup{
	height: 26px; display: flex; align-items: flex-start;
	background: linear-gradient(#e6f2f9, #a9cfe8);
}
.g1{width: 338px; margin-right: 4px;}
.g2{width: 206px; margin-right: 5px;}
.g3{width: 323px; margin-right: 5px;}
.g4{width: 191px;}
.grip{
	width: 10.500px; height: 100%; flex: none;
	background: radial-gradient(circle at 1px 1px, #b6c6d2 1px, transparent 1.300px) 2px 2px / 3px 4px repeat-y;
}
.tb{
	width: 22px; height: 24px; display: flex; align-items: center; justify-content: center; flex: none;
}
.tb.on{background: #cfe3f0; border: 1px solid #7fa6bf;}
.tsep{width: 2px; height: 18px; margin: 3px 3px 0; background: #fafcfd; border-left: 1px solid #8fa4b2; flex: none;}

.tab{width: 179px; height: 25px; margin-top: 4px; margin-bottom: -1px; position: relative; z-index: 1;}
.tabshape{position: absolute; left: 0; top: 0; width: 179px; height: 25px;}
.tabicon{position: absolute; left: 21px; top: 3px; width: 16px; height: 18px;}
.tablabel{
	position: absolute; left: 39px; top: 2px; font-size: 11.700px; font-weight: 600;
	color: #21527f; line-height: 20px;
}
.tabclose{position: absolute; left: 154px; top: 7px; width: 12px; height: 12px;}
.band{
	height: 7px; flex: none; border-top: 1px solid #7f9fb4;
	background: linear-gradient(#a8d0e8, #c4e0f0);
}

/* work area */
.workspace{height: 729px; display: flex; flex: none; background: #aacde4;}
.sidetools{
	width: 28px; flex: none; background: #e3e9f1;
	display: flex; flex-direction: column; align-items: stretch;
}
.sgroup{
	background: linear-gradient(90deg, #e8f3fa, #a6cde7);
	padding-bottom: 3px; border-bottom: 1px solid #c2d2de;
}
.sgroup.second{margin-top: 27px;}
.sgroup.second .grip-h{height: 9px;}
.sgroup.second .ssep{margin-top: 2px; margin-bottom: 2px;}
.grip-h{
	height: 10px;
	background: radial-gradient(circle at 1px 1px, #b6c6d2 1px, transparent 1.300px) 2px 3px / 4px 3px repeat-x;
}
.sb{height: 21px; width: 28px; display: flex; align-items: center; justify-content: center; padding-right: 2px;}
.sb.on{margin: 0 3px 0 2px; width: 23px; background: #cfe3f0; border: 1px solid #7fa6bf; padding-right: 0;}
.ssep{height: 2px; margin: 1px 2px 1px 4px; background: #fafcfd; border-top: 1px solid #9fb2be;}
.angle{
	height: 15px; margin: 3px 2px 3px 3px; background: #fff;
	font-family: Roboto, sans-serif; font-size: 11.500px; line-height: 13px;
}

.sidepanel{width: 120px; flex: none; display: flex; flex-direction: column; margin-right: 5px; background: #c4d8e6;}
.overview{height: 101px; background: #dfdfd0; border: 2px solid #6f7272; flex: none;}
.overview svg{display: block; width: 116px; height: 97px;}
.devices{flex: 1; margin-top: 4px; display: flex; flex-direction: column; min-height: 0; height: 624px;}
.devhead{
	height: 24px; flex: none; display: flex; align-items: center; padding-left: 2px;
	background: linear-gradient(#e6f2f9, #b4d6ec);
	border-top: 1px solid #8aa; border-left: 1px solid #9ab;
}
.devbtn{
	width: 16px; height: 16px; border-radius: 3px; background: #0b5bd8; color: #fff;
	font-family: "Liberation Sans", sans-serif; font-size: 13px; font-weight: bold;
	text-align: center; line-height: 16px; margin-right: 5px;
}
.devtitle{font-family: Roboto, sans-serif; font-size: 11.800px; margin-left: 14px; color: #1a2a40;}
.devlist{
	flex: 1; background: #fff; border-left: 2px solid #5b8fc6; border-right: 1px solid #666;
	border-bottom: 2px solid #5b8fc6; font-family: Roboto, sans-serif; font-size: 11.600px;
	padding-top: 1px;
}
.devlist li{height: 13px; line-height: 14px; padding-left: 2px; color: #000;}
.devlist li.picked{background: #3d95f5; color: #fff;}

.canvas{
	width: 1442px; height: 728px; flex: none;
	border: 1px solid #84847a; border-right-color: #555; border-bottom-color: #555;
	background-color: #dfdfd0;
	background-image:
		repeating-linear-gradient(90deg, transparent 0 177.500px, #bcbcaa 177.500px 179.500px, transparent 179.500px 226px),
		repeating-linear-gradient(180deg, transparent 0 192.600px, #bcbcaa 192.600px 194.600px, transparent 194.600px 226px),
		repeating-linear-gradient(90deg, transparent 0 8.500px, #c0bfae 8.500px 9.500px, transparent 9.500px 11.300px),
		repeating-linear-gradient(180deg, transparent 0 1.300px, #c0bfae 1.300px 2.300px, transparent 2.300px 11.300px);
}
.sheet{display: block; width: 1440px; height: 726px;}
.sheet text{font-family: "Liberation Sans", sans-serif;}
.sheet .ref{font-size: 28px; fill: #111;}
.sheet .pin{font-size: 18.500px; fill: #111;}
.sheet .muted{fill: #808080;}
.sheet .logic-one{font-size: 36px; font-weight: bold; fill: #ccc; text-anchor: middle;}
.sheet .logic-zero{font-size: 18px; font-weight: bold; fill: #ccc; text-anchor: middle;}

/* status line */
.statusbar{
	height: 27px; flex: none; display: flex; gap: 2px; padding-top: 1px; background: #dfe8f0;
	font-family: Roboto, sans-serif; font-size: 11px;
}
.sgrp{height: 26px; display: flex; align-items: center; background: linear-gradient(#ecf6fb, #b6d7ec);}
.run{width: 258px; padding-left: 20px;}
.run .ic{width: 18px; height: 18px;}
.step{margin-left: 19px;}
.pause{margin-left: 17px;}
.stop{margin-left: 18.500px;}
.stsep{width: 1px; height: 20px; background: #8fa4b2; margin: 0 12px 0 11.500px;}
.info{width: 14px; height: 14px;}
.msg{margin-left: 7px; color: #1a1a1a; font-size: 10.600px;}
.design{width: 120px;}
.variant{
	width: 97px; height: 20px; font-family: Roboto, sans-serif; font-size: 10.600px;
	background: #ececec; border: 1px solid #999; color: #111; margin-left: 4px;
}
.anim{width: 412px;}
.animtext{color: #1c5a1c; margin-left: 0.500px;}
.coords{flex: 1;}
.cx{margin-left: 346.500px;}
.cy{margin-left: 350px;}
.unit{margin-left: 16px; color: #000080;}

/* windows taskbar */
.taskbar{
	height: 40px; flex: none; background: #2a52a0;
	display: flex; align-items: center; gap: 7px;
	color: #e8eef8; font-size: 12px;
}
.tk{width: 54px; height: 38px; display: flex; align-items: center; justify-content: center; position: relative; flex: none;}
.start{width: 46px; justify-content: flex-start;}
.winlogo{width: 26px; height: 26px; margin-left: 12px;}
.tkicon{width: 30px; height: 30px;}
.active{background: #5276b8; border: 1px solid #7a97cc; margin-right: 4px; width: 53px;}
.sliver{position: absolute; right: -5px; top: -1px; width: 3px; height: 38px; background: #5276b8;}
.current{width: 58px; height: 39px; margin-left: 1px; background: #7b93c0; border: 1px solid #dfe6f4;}
.tray{margin-left: auto; display: flex; align-items: center; height: 40px; padding-right: 11px;}
.tr{width: 24px; height: 24px; display: flex; align-items: center; justify-content: center;}
.tricon{width: 22px; height: 22px;}
.uparrow{width: 0; height: 0; border: 4px solid transparent; border-top: 0; border-bottom: 4px solid #f4f6fb;}
.lang{width: 40px; margin-left: 2px; margin-top: 2px; text-align: center; line-height: 16.500px;}
.clock{width: 64px; margin-left: 2px; margin-top: 2px; text-align: center; line-height: 16.500px;}
```
